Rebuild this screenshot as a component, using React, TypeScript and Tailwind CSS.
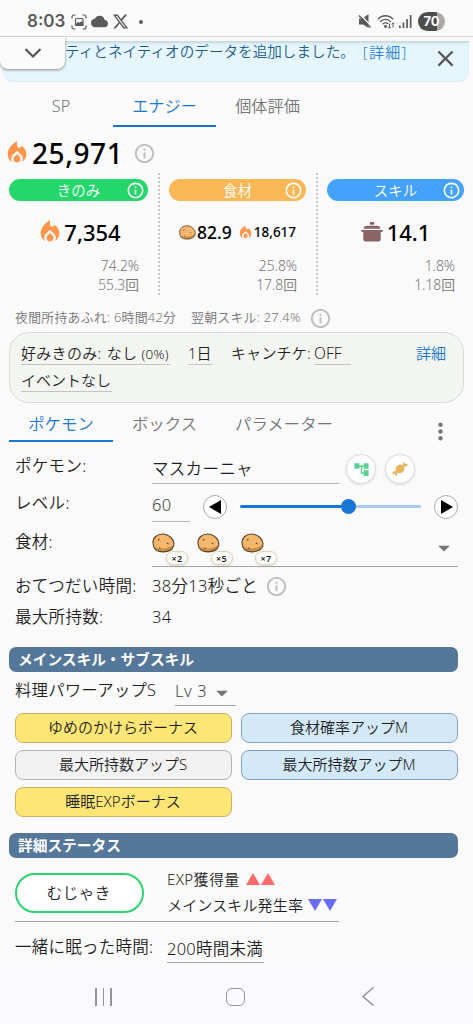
import type { ReactNode } from "react"
import { FaXTwitter } from "react-icons/fa6"
import {
  MdAccountTree,
  MdArrowDropDown,
  MdClose,
  MdCloud,
  MdLocalFireDepartment,
  MdMoreVert,
  MdOutlineInfo,
} from "react-icons/md"

const subSkills = [
  { name: "ゆめのかけらボーナス", style: "border-[#d3ad63] bg-[#fbe676]" },
  { name: "食材確率アップM", style: "border-[#7f9fc4] bg-[#d4e9f8]" },
  { name: "最大所持数アップS", style: "border-[#b4b4b4] bg-[#f2f2f2]" },
  { name: "最大所持数アップM", style: "border-[#7f9fc4] bg-[#d4e9f8]" },
  { name: "睡眠EXPボーナス", style: "border-[#d3ad63] bg-[#fbe676]" },
]

function Potato({ className }: { className: string }) {
  return (
    <svg viewBox="0 0 24 21" className={className}>
      <path
        d="M1 10.500C.6 5 5.500 1 11 1c4 0 6 1 9 4 3.500 3.500 4 8.500 1 11.500-3 2.800-6 3.300-10 3.300C4 19.800 1.300 17 1 10.500Z"
        fill="#f3b86d"
      />
      <path d="M1.500 14c5 3 14 3.500 20.800-1.500.3 2-.3 3-1.800 4.300-3 2.500-6 3-9.500 3-5 0-8-1.800-9.500-5.800Z" fill="#cd8b43" />
      <path
        d="M1 10.500C.6 5 5.500 1 11 1c4 0 6 1 9 4 3.500 3.500 4 8.500 1 11.500-3 2.800-6 3.300-10 3.300C4 19.800 1.300 17 1 10.500Z"
        fill="none"
        stroke="#57432f"
        strokeWidth="1.200"
      />
      <path d="M6 7.500l1.800-1M15.500 10.500l1.800 1M7.500 15.500l1.500.8" stroke="#6d4a28" strokeWidth="1.200" />
    </svg>
  )
}

function Pot() {
  return (
    <svg viewBox="0 0 22 20" className="h-5 w-[22px]" fill="#8a6565">
      <rect x="8.800" y="0" width="4.600" height="2.800" rx="1.200" />
      <path d="M2.500 6.800C3 4.600 4 3.800 6 3.800h10c2 0 3 .8 3.500 3Z" />
      <path d="M0 7.900h22v1.300l-2.300 1V17a2.500 2.500 0 0 1-2.500 2.500H4.800A2.500 2.500 0 0 1 2.300 17v-6.800L0 9.200Z" />
    </svg>
  )
}

function Candy() {
  return (
    <svg viewBox="0 0 16 16" className="h-4 w-4" fill="#e9b55c">
      <path d="M4.600 5.400C6.500 3.400 9 3 11 4l.6-3.600 1.500 2.300 2.700.2-.8 2.300-3 .5c.8 2 .2 4-1.200 5.200-1.600 1.300-3.800 1.700-5.600.8l-.6 3.800-1.700-2.300-2.700-.3.900-2.400 2.900-.4c-.6-1.700-.5-3.300.6-4.700Z" />
    </svg>
  )
}

function StatusBar() {
  return (
    <div className="flex h-9 items-center pt-[7px] text-[#5a5a5a]">
      <div className="ml-[27px] w-[44px] font-['Inter'] text-[17px] font-semibold">8:03</div>
      <svg viewBox="0 0 16 16" className="h-4 w-4" fill="none" stroke="currentColor" strokeWidth="1.200">
        <path d="M1 4.500V3a2 2 0 0 1 2-2h1.500M11.500 1H13a2 2 0 0 1 2 2v1.500M15 11.500V13a2 2 0 0 1-2 2h-1.500M4.500 15H3a2 2 0 0 1-2-2v-1.500" />
        <rect x="4.500" y="4.500" width="7.500" height="7" rx="1" />
        <path d="M5 11l2-2.500 1.500 1.200L10.500 8 12 11Z" fill="currentColor" />
      </svg>
      <MdCloud className="ml-1 h-[17px] w-[17px]" />
      <FaXTwitter className="ml-[4px] h-[17px] w-[17px]" />
      <div className="ml-[10px] h-1 w-1 rounded-full bg-[#5a5a5a]" />
      <div className="mr-[28px] ml-auto flex items-center">
        <svg viewBox="0 0 14 15" className="h-[15px] w-[14px]" fill="currentColor">
          <path d="M1 4.500h3.500L10.500 0v14L5 10.500H1Z" />
          <path d="M2.500 .5 13.500 12.500" stroke="#fafafa" strokeWidth="1.200" />
          <path d="M1 1.500 12.500 13.500" stroke="currentColor" strokeWidth="1.400" />
        </svg>
        <svg viewBox="0 0 18 15" className="ml-[5px] h-[15px] w-[18px]" fill="none" stroke="currentColor" strokeWidth="1.300">
          <path d="M1 5.200C5 .6 12 .6 16 5.200M3.200 7.800c3-3.300 7.600-3.300 10.600 0M5.600 10.300c1.600-1.800 4.200-1.800 5.600-.4" />
          <circle cx="8.500" cy="12.500" r=".8" fill="currentColor" />
          <path d="M12.500 9.500v4.500M11.200 12.800l1.300 1.400 1.300-1.400M16 13.500V9M14.700 10.200 16 8.800l1.300 1.400" strokeWidth="1" />
        </svg>
        <svg viewBox="0 0 13 13" className="ml-[4px] h-[13px] w-[13px]" fill="currentColor">
          <rect x="0" y="10.500" width="1.700" height="2.500" />
          <rect x="3.600" y="7.500" width="1.700" height="5.500" />
          <rect x="7.200" y="4" width="1.700" height="9" />
          <rect x="10.800" y="0" width="1.700" height="13" />
        </svg>
        <div className="ml-[6px] flex h-[19px] w-[27px] items-center justify-center rounded-full bg-[linear-gradient(90deg,#4d4d4d_70%,#a8a8a8_70%)] font-['Inter'] text-[13px] font-bold text-white">
          70
        </div>
      </div>
    </div>
  )
}

function Column({
  title,
  style,
  percent,
  times,
  children,
}: {
  title: string
  style: string
  percent: string
  times: string
  children: ReactNode
}) {
  return (
    <div className="pt-[6px]">
      <div className={`relative flex h-[22px] items-center justify-center rounded-full pt-px text-[14.500px] text-white ${style}`}>
        {title}
        <MdOutlineInfo className="absolute top-[2px] right-[3px] h-[19px] w-[19px]" />
      </div>
      <div className="mt-[16px] flex h-[30px] items-center justify-center">{children}</div>
      <div className="mt-[9px] pr-[9px] text-right text-[13.800px] leading-[19px] text-[#757575]">
        <div>{percent}</div>
        <div>{times}</div>
      </div>
    </div>
  )
}

function Divider() {
  return (
    <svg viewBox="0 0 2 122" className="h-[122px] w-[2px] shrink-0">
      <path d="M1 0v122" stroke="#c6c6c6" strokeWidth="2" strokeDasharray="2 2" />
    </svg>
  )
}

function SectionTitle({ children }: { children: ReactNode }) {
  return (
    <div className="mr-[15px] ml-[9px] flex h-[25px] shrink-0 items-center rounded-[7px] bg-[#557799] pb-px pl-[9px] text-[14.700px] font-bold text-white">
      {children}
    </div>
  )
}

function Ingredient({ count }: { count: number }) {
  return (
    <div className="relative h-[33px] w-[44.500px]">
      <Potato className="h-[20px] w-[23px]" />
      <div className="absolute top-[18px] left-[14px] flex h-[14px] w-[22px] items-center justify-center rounded-full border border-[#dfd4ac] bg-white text-[9px] leading-none font-semibold shadow-sm">
        ×{count}
      </div>
    </div>
  )
}

function Label({ children }: { children: ReactNode }) {
  return <div className="w-[137px] shrink-0 whitespace-nowrap">{children}</div>
}

export default function App() {
  return (
    <div className="flex h-[1024px] w-[473px] flex-col overflow-hidden bg-[#fafafa] font-['Noto_Sans','Noto_Sans_CJK_JP',sans-serif] font-[350] text-[#1f1f1f]">
      <StatusBar />

      {/* News banner */}
      <div className="relative h-[47px] border-t border-[#d9d9d9] pt-1">
        <div className="mr-[4px] ml-[3px] flex h-[41px] rounded-b-[10px] border-b border-[#d5edf6] bg-[#e5f6fd] pl-[62px] shadow-[inset_0_3px_3px_-1px_#c5d5dc]">
          <div className="mt-[-1px] text-[14.600px] leading-[22px] whitespace-nowrap text-[#1d5c8d]">
            ティとネイティオのデータを追加しました。
          </div>
          <div className="ml-[8px] text-[15px] leading-[22px] tracking-[1.300px] text-[#2f83d4]">[詳細]</div>
          <MdClose className="mt-[4px] mr-[10px] ml-auto h-[27px] w-[27px] text-[#555]" />
        </div>
        <div className="absolute top-0 left-0 flex h-[32px] w-[65px] items-center justify-center rounded-b-[8px] bg-[#fbfbfb] shadow-[0_1px_3px_#888]">
          <svg viewBox="0 0 18 10" className="h-[10px] w-[18px]" fill="none" stroke="#555" strokeWidth="2.200">
            <path d="M1.500 1 9 8.500 16.500 1" />
          </svg>
        </div>
      </div>

      {/* Result tabs */}
      <div className="flex h-[44px] pl-[9px] text-center text-[16.200px] leading-[46px] text-[#757575]">
        <div className="w-[104px]">SP</div>
        <div className="w-[103px] border-b-[2.500px] border-[#1976d2] text-[#1976d2]">エナジー</div>
        <div className="w-[103px]">個体評価</div>
      </div>

      <div className="flex h-[46px] items-center pt-[6px] pl-[3px]">
        <MdLocalFireDepartment className="h-[28px] w-[28px] text-[#ff944b]" />
        <span className="ml-[1px] text-[28px] leading-none font-medium tracking-[0.600px] text-black">25,971</span>
        <MdOutlineInfo className="ml-[10px] h-[23px] w-[23px] text-[#bcbcbc]" />
      </div>

      <div className="flex h-[131px] justify-between pr-[9px] pl-[9px]">
        <Column title="きのみ" style="w-[139px] bg-[#25d76b]" percent="74.2%" times="55.3回">
          <MdLocalFireDepartment className="h-[28px] w-[28px] text-[#ff944b]" />
          <span className="text-[22px] font-medium text-black">7,354</span>
        </Column>
        <Divider />
        <Column title="食材" style="w-[137px] bg-[#fab755]" percent="25.8%" times="17.8回">
          <Potato className="h-[15px] w-[17px]" />
          <span className="ml-[1px] text-[17.500px] font-medium text-black">82.9</span>
          <MdLocalFireDepartment className="ml-[5px] h-[17px] w-[17px] text-[#ff944b]" />
          <span className="text-[13.500px] font-medium text-black">18,617</span>
        </Column>
        <Divider />
        <Column title="スキル" style="w-[137px] bg-[#44a2fd]" percent="1.8%" times="1.18回">
          <Pot />
          <span className="ml-[4px] text-[22px] font-medium text-black">14.1</span>
        </Column>
      </div>

      <div className="flex h-[28px] items-center pl-[15px] text-[12.900px] tracking-[0.250px] whitespace-nowrap text-[#757575]">
        <span className="w-[176px]">夜間所持あふれ: 6時間42分</span>
        <span className="w-[119px]">翌朝スキル: 27.4%</span>
        <MdOutlineInfo className="-ml-[1px] h-[23px] w-[23px] text-[#bcbcbc]" />
      </div>

      {/* Calculation settings */}
      <div className="mr-[9px] ml-[9px] h-[71px] shrink-0 rounded-[20px] border border-[#d9d9d9] bg-[#f3f5f0] pt-[10px] pr-[17px] pl-[11px] text-[15px] leading-[21px]">
        <div className="flex h-[27px] items-start whitespace-nowrap">
          <div className="w-[149px] border-b border-[#c4c4c4] tracking-[0.300px]">
            好みきのみ: <span className="ml-[1px]">なし</span> <span className="text-[13.500px] leading-none">(0%)</span>
          </div>
          <div className="ml-[18px] w-[24px] border-b border-[#c4c4c4]">1日</div>
          <div className="ml-[19px] w-[83px] tracking-[0.200px]">キャンチケ:</div>
          <div className="w-[37px] border-b border-[#c4c4c4] text-[15.500px]">OFF</div>
          <div className="ml-auto text-[#1976d2]">詳細</div>
        </div>
        <div className="w-[91px] border-b border-[#c4c4c4]">イベントなし</div>
      </div>

      {/* Editor tabs */}
      <div className="flex h-[39px] pl-[9px] text-center text-[16.400px] leading-[42px] text-[#757575]">
        <div className="w-[104px] border-b-[2.500px] border-[#1976d2] text-[#1976d2]">ポケモン</div>
        <div className="w-[103px]">ボックス</div>
        <div className="w-[136px]">パラメーター</div>
        <MdMoreVert className="mt-[15px] mr-[19px] ml-auto h-[27px] w-[27px]" />
      </div>

      <div className="flex flex-col pl-[15px] text-[16.500px] tracking-[0.300px]">
        <div className="flex h-[42px] pt-[12px] leading-[24px]">
          <Label>ポケモン:</Label>
          <div className="h-[30px] w-[187px] border-b border-[#b5b5b5] pt-[3px]">マスカーニャ</div>
          <div className="ml-[7px] flex h-[30px] w-[30px] items-center justify-center rounded-full border border-[#ddd] bg-white shadow-sm">
            <MdAccountTree className="h-[17px] w-[17px] text-[#5ccf92]" />
          </div>
          <div className="ml-[9px] flex h-[30px] w-[30px] items-center justify-center rounded-full border border-[#ddd] bg-white shadow-sm">
            <Candy />
          </div>
        </div>

        <div className="flex h-[37px] items-start pt-[7px] leading-[24px]">
          <Label>レベル:</Label>
          <div className="h-[31px] w-[38px] border-b border-[#b5b5b5] pt-[2px] text-[#444]">60</div>
          <div className="mt-[4px] ml-[13px] flex h-[24px] w-[24px] items-center justify-center rounded-full border border-[#aaa] bg-white">
            <svg viewBox="0 0 12 14" className="mr-[1px] h-[14px] w-[12px]">
              <path d="M12 0v14L0 7Z" />
            </svg>
          </div>
          <div className="mt-[8px] ml-[13px] flex h-[15px] w-[181px] items-center">
            <div className="h-[3px] w-[101px] rounded-l-full bg-[#1976d2]" />
            <div className="h-[15px] w-[15px] rounded-full bg-[#1976d2]" />
            <div className="h-[2.500px] flex-1 rounded-r-full bg-[#a7caed]" />
          </div>
          <div className="mt-[4px] ml-[13px] flex h-[24px] w-[24px] items-center justify-center rounded-full border border-[#aaa] bg-white">
            <svg viewBox="0 0 12 14" className="ml-[1px] h-[14px] w-[12px]">
              <path d="M0 0v14l12-7Z" />
            </svg>
          </div>
        </div>

        <div className="flex h-[47px] pt-[9px] leading-[24px]">
          <Label>食材:</Label>
          <div className="flex h-[37px] w-[306px] border-b border-[#a5a5a5] pt-[3px]">
            <Ingredient count={2} />
            <Ingredient count={5} />
            <Ingredient count={7} />
            <MdArrowDropDown className="mt-[1px] ml-auto h-[28px] w-[28px] text-[#757575]" />
          </div>
        </div>

        <div className="flex h-[36px] items-center">
          <Label>おてつだい時間:</Label>
          <div>38分13秒ごと</div>
          <MdOutlineInfo className="ml-[7px] h-[23px] w-[23px] text-[#bcbcbc]" />
        </div>
        <div className="flex h-[27px] items-center">
          <Label>最大所持数:</Label>
          <div>34</div>
        </div>
      </div>

      <div className="h-[16px]" />
      <SectionTitle>メインスキル・サブスキル</SectionTitle>
      <div className="flex h-[41px] pt-[6px] pl-[15px] text-[16.400px] leading-[24px] tracking-[0.200px]">
        <div className="w-[160px]">料理パワーアップS</div>
        <div className="flex h-[28px] w-[61px] border-b border-[#a5a5a5] pt-[1px] tracking-[0.600px] whitespace-nowrap text-[#444]">
          <div className="w-[34px]">Lv 3</div>
          <MdArrowDropDown className="h-[28px] w-[28px] shrink-0 text-[#757575]" />
        </div>
      </div>
      <div className="grid grid-cols-2 gap-x-[9px] gap-y-[7px] pr-[15px] pl-[15px] text-[15px]">
        {subSkills.map((skill) => (
          <div
            key={skill.name}
            className={`flex h-[30px] items-center justify-center rounded-[8px] border pr-[1px] pb-[2px] ${skill.style}`}
          >
            {skill.name}
          </div>
        ))}
      </div>

      <div className="h-[16px]" />
      <SectionTitle>詳細ステータス</SectionTitle>
      <div className="ml-[15px] flex h-[64px] w-[324px] border-b border-[#a5a5a5] pt-[15px]">
        <div className="flex h-[40px] w-[129px] items-center justify-center rounded-full border-2 border-[#2bd46e] bg-white pr-[2px] text-[16px]">
          むじゃき
        </div>
        <div className="mt-[-7px] ml-[23px] text-[15px] leading-[26px] whitespace-nowrap">
          <div className="flex items-center tracking-[0.400px]">
            EXP獲得量
            <svg viewBox="0 0 29 12" className="ml-[6px] h-[12px] w-[29px]" fill="#ff6b6b">
              <path d="M0 12 7 0l7 12ZM15 12 22 0l7 12Z" />
            </svg>
          </div>
          <div className="flex items-center tracking-[0.150px]">
            メインスキル発生率
            <svg viewBox="0 0 29 12" className="ml-[5px] h-[12px] w-[29px]" fill="#6b6bff">
              <path d="M0 0 7 12 14 0ZM15 0l7 12 7-12Z" />
            </svg>
          </div>
        </div>
      </div>
      <div className="flex h-[47px] pt-[13px] pl-[15px] text-[16.500px] leading-[24px] tracking-[0.250px] whitespace-nowrap">
        <div className="w-[152px]">一緒に眠った時間:</div>
        <div className="h-[28px] w-[97px] border-b border-[#a5a5a5] pt-[2px]">200時間未満</div>
      </div>

      {/* Android navigation bar */}
      <div className="flex flex-1 items-center bg-[#f9f9ff]">
        <div className="ml-[95px] flex gap-[6px]">
          <div className="h-[18px] w-[1.500px] bg-[#949499]" />
          <div className="h-[18px] w-[1.500px] bg-[#949499]" />
          <div className="h-[18px] w-[1.500px] bg-[#949499]" />
        </div>
        <div className="ml-[114px] h-[18px] w-[19px] rounded-[6px] border-[1.500px] border-[#949499]" />
        <svg viewBox="0 0 12 19" className="ml-[117px] h-[19px] w-[12px]" fill="none" stroke="#949499" strokeWidth="1.500">
          <path d="M11.500 .5 1 9.500l10.500 9" />
        </svg>
      </div>
    </div>
  )
}
